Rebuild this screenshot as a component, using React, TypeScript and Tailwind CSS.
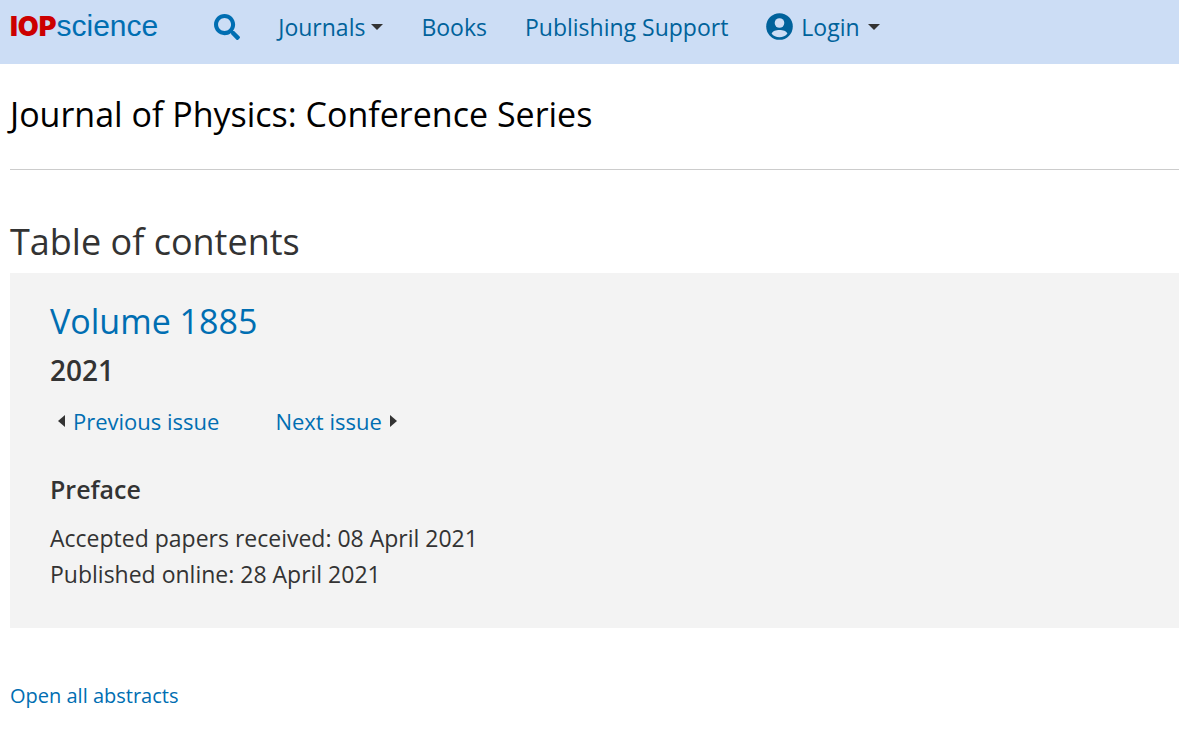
import { FaSearch } from 'react-icons/fa';

function CaretDown() {
  return (
    <svg viewBox="0 0 12 6" className="h-[6px] w-[12px] fill-[#333333]" aria-hidden="true">
      <path d="M0 0h12L6 6z" />
    </svg>
  );
}

function AccountIcon() {
  return (
    <svg viewBox="0 0 27 27" className="h-[27px] w-[27px]" aria-hidden="true">
      <circle cx="13.5" cy="13.5" r="13.3" fill="#00629b" />
      <circle cx="13.5" cy="10" r="4.8" fill="#ccddf5" />
      <path d="M5.6 20.500C6.600 18 10 17 13.500 17s6.900 1 7.900 3.500C19.700 23 16.700 24.200 13.500 24.200S7.300 23 5.600 20.500z" fill="#ccddf5" />
    </svg>
  );
}

function Header() {
  return (
    <header className="flex h-16 items-start bg-[#ccddf5] px-[10px] text-[23px] leading-[32px] text-[#00629b]">
      <nav className="flex items-center pt-[10px]">
        <a href="#" className="flex items-baseline">
          <span className="font-['Inter'] text-[27px] font-black text-[#cc0000]">IOP</span>
          <span className="font-['Liberation_Sans'] text-[30px] text-[#006eb2]">science</span>
        </a>
        <button type="button" aria-label="Search" className="ml-14 text-[#006eb2]">
          <FaSearch size={26} />
        </button>
        <button type="button" className="ml-[38px] flex items-center gap-1.5">
          Journals
          <CaretDown />
        </button>
        <a href="#" className="ml-[38px]">Books</a>
        <a href="#" className="ml-[38px]">Publishing Support</a>
        <button type="button" className="ml-[38px] flex items-center gap-2">
          <AccountIcon />
          Login
          <CaretDown />
        </button>
      </nav>
    </header>
  );
}

function IssueInfo() {
  return (
    <section className="bg-[#f3f3f3] px-10 pt-6 pb-9">
      <h3 className="text-[34px] leading-[48px] text-[#006eb2]">Volume 1885</h3>
      <p className="mt-1 text-[28px] leading-[42px] font-semibold">2021</p>
      <div className="mt-3 flex gap-14 pl-2 text-[22px] leading-[36px] text-[#006eb2]">
        <a href="#" className="flex items-center gap-2">
          <svg viewBox="0 0 7 12" className="h-3 w-[7px] fill-[#333333]" aria-hidden="true">
            <path d="M7 0v12L0 6z" />
          </svg>
          Previous issue
        </a>
        <a href="#" className="flex items-center gap-2">
          Next issue
          <svg viewBox="0 0 7 12" className="h-3 w-[7px] fill-[#333333]" aria-hidden="true">
            <path d="M0 0v12L7 6z" />
          </svg>
        </a>
      </div>
      <h4 className="mt-8 text-[25px] leading-[36px] font-semibold">Preface</h4>
      <p className="mt-[13px] text-[23px] leading-[36px]">
        Accepted papers received: 08 April 2021
        <br />
        Published online: 28 April 2021
      </p>
    </section>
  );
}

export default function App() {
  return (
    <div className="min-h-screen bg-white font-['Open_Sans',sans-serif] text-[#333333]">
      <Header />
      <main className="pl-[10px]">
        <h1 className="border-b border-[#cccccc] pt-[26px] pb-[31px] text-[34px] leading-[48px] text-black">
          Journal of Physics: Conference Series
        </h1>
        <h2 className="pt-11 pb-[3px] text-[36px] leading-[56px]">Table of contents</h2>
        <IssueInfo />
        <a href="#" className="mt-[52px] inline-block text-[20px] leading-[32px] text-[#006eb2]">
          Open all abstracts
        </a>
      </main>
    </div>
  );
}
